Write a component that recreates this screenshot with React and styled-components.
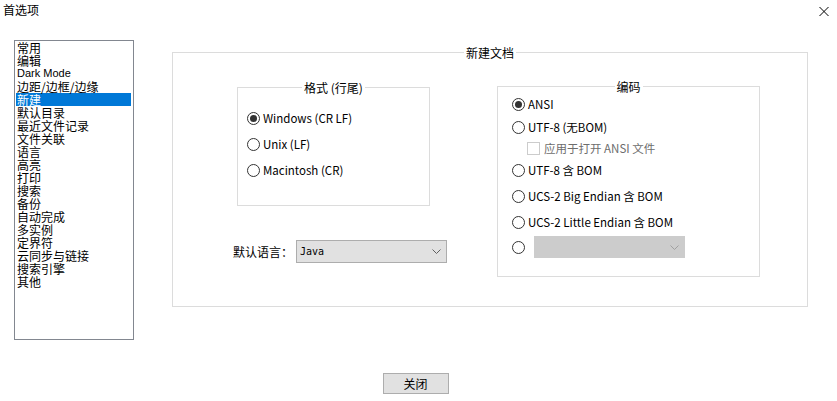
import React from 'react';
import styled, { createGlobalStyle } from 'styled-components';

const GlobalStyle = createGlobalStyle`
  html, body { margin: 0; padding: 0; background: #ffffff; }
  body { font-family: "Noto Sans CJK SC", "Noto Sans", sans-serif; font-size: 12px; color: #000; }
`

const Window = styled.div`
  width: 837px;
  height: 401px;
  display: flex;
  flex-direction: column;
  background: #fff;
  overflow: hidden;
`
const TitleBar = styled.div`
  height: 22px;
  flex-shrink: 0;
  display: flex;
  justify-content: space-between;
  align-items: flex-start;
`
const Title = styled.div`
  padding: 3px 0 0 3px;
  line-height: 14px;
  font-size: 12px;
`
const CloseX = styled.div`
  width: 10px;
  height: 9px;
  margin: 7px 8px 0 0;
  display: flex;
`
const Body = styled.div`
  box-sizing: border-box;
  display: flex;
  align-items: flex-start;
  padding: 18px 0 0 14px;
  height: 351px;
  flex-shrink: 0;
`
const List = styled.ul`
  box-sizing: border-box;
  width: 120px;
  height: 300px;
  margin: 0;
  padding: 0 2px 0 1px;
  list-style: none;
  border: 1px solid #828790;
`
const Item = styled.li`
  height: 13px;
  line-height: 13px;
  padding-left: 1px;
  white-space: nowrap;
  background: ${p => (p.$active ? '#0078d7' : 'transparent')};
  color: ${p => (p.$active ? '#fff' : '#000')};
  font-family: ${p => (p.$latin ? '"Liberation Sans", sans-serif' : '"Noto Sans CJK SC", sans-serif')};
  font-size: ${p => (p.$latin ? '11px' : '12px')};
`
const Panel = styled.div`
  margin: 6px 0 0 38px;
`
const Group = styled.div`
  box-sizing: border-box;
  width: ${p => p.$w}px;
  display: flex;
  flex-direction: column;
  margin-top: ${p => p.$mt || 0}px;
`
const GroupHead = styled.div`
  display: flex;
  height: 13px;
  &::before, &::after {
    content: '';
    flex: 1;
    margin-top: 6px;
    border-top: 1px solid #dcdcdc;
  }
  &::before { border-left: 1px solid #dcdcdc; }
  &::after { border-right: 1px solid #dcdcdc; }
`
const GroupTitle = styled.span`
  padding: 0 2px;
  line-height: 13px;
  font-size: 12px;
  white-space: nowrap;
`
const GroupBody = styled.div`
  box-sizing: border-box;
  height: ${p => p.$h}px;
  border: 1px solid #dcdcdc;
  border-top: none;
  display: flex;
  flex-direction: column;
  padding: ${p => p.$pad || '0'};
`
const Columns = styled.div`
  display: flex;
  align-items: flex-start;
  gap: 67px;
`
const LeftCol = styled.div`
  width: 193px;
  display: flex;
  flex-direction: column;
`
const RadioRow = styled.label`
  display: flex;
  align-items: center;
  height: ${p => p.$h || 26}px;
  padding-left: ${p => p.$indent || 0}px;
  font-size: 11.5px;
  color: ${p => (p.$disabled ? '#6d6d6d' : '#000')};
  white-space: nowrap;
`
const Circle = styled.span`
  box-sizing: border-box;
  width: 13px;
  height: 13px;
  border-radius: 50%;
  border: 1px solid #333;
  background: #fff;
  margin-right: 3px;
  display: flex;
  align-items: center;
  justify-content: center;
  flex-shrink: 0;
  &::after {
    content: '';
    width: 7px;
    height: 7px;
    border-radius: 50%;
    background: ${p => (p.$on ? '#333' : 'transparent')};
  }
`
const Box = styled.span`
  box-sizing: border-box;
  width: 13px;
  height: 13px;
  border: 1px solid #cccccc;
  background: #fff;
  margin-right: 4px;
  flex-shrink: 0;
`
const Select = styled.div`
  box-sizing: border-box;
  width: ${p => p.$w}px;
  height: ${p => p.$h}px;
  margin-left: ${p => p.$ml || 0}px;
  flex-shrink: 0;
  background: ${p => (p.$disabled ? '#cccccc' : '#e1e1e1')};
  border: 1px solid ${p => (p.$disabled ? '#cccccc' : '#adadad')};
  display: flex;
  align-items: center;
  justify-content: space-between;
  padding: 0 5px 0 3px;
  font-family: "DejaVu Sans Mono", monospace;
  font-size: 10px;
`
const LangRow = styled.div`
  display: flex;
  align-items: center;
  margin: 34px 0 0 -4px;
  height: 23px;
`
const LangLabel = styled.span`
  font-size: 12px;
  width: 63px;
  flex-shrink: 0;
  white-space: nowrap;
`
const Footer = styled.div`
  display: flex;
  justify-content: center;
  padding: 0 6px 0 0;
`
const Button = styled.button`
  box-sizing: border-box;
  width: 66px;
  height: 21px;
  background: #e1e1e1;
  border: 1px solid #adadad;
  font-family: "Noto Sans CJK SC", sans-serif;
  font-size: 12px;
  padding: 0;
  line-height: 19px;
  color: #000;
`

const Chevron = ({ color }) => (
  <svg width="9" height="5" viewBox="0 0 9 5">
    <path d="M0.5 0.5 L4.5 4.5 L8.5 0.5" fill="none" stroke={color} strokeWidth="1" />
  </svg>
);

const pages = [
  '常用', '编辑', 'Dark Mode', '边距/边框/边缘', '新建', '默认目录', '最近文件记录',
  '文件关联', '语言', '高亮', '打印', '搜索', '备份', '自动完成', '多实例', '定界符',
  '云同步与链接', '搜索引擎', '其他',
];

const GroupBox = ({ title, w, h, mt, pad, children }) => (
  <Group $w={w} $mt={mt}>
    <GroupHead>
      <GroupTitle>{title}</GroupTitle>
    </GroupHead>
    <GroupBody $h={h} $pad={pad}>{children}</GroupBody>
  </Group>
);

const Radio = ({ on, children, h, indent }) => (
  <RadioRow $h={h} $indent={indent}>
    <Circle $on={on} />
    {children}
  </RadioRow>
);

export default function App() {
  return (
    <Window>
      <GlobalStyle />
      <TitleBar>
        <Title>首选项</Title>
        <CloseX>
          <svg width="10" height="9" viewBox="0 0 10 9">
            <path d="M0.5 0 L9.5 9 M9.5 0 L0.5 9" stroke="#000" strokeWidth="1" />
          </svg>
        </CloseX>
      </TitleBar>
      <Body>
        <List>
          {pages.map(p => (
            <Item key={p} $active={p === '新建'} $latin={p === 'Dark Mode'}>{p}</Item>
          ))}
        </List>
        <Panel>
          <GroupBox title="新建文档" w={636} h={248} pad="21px 0 0 64px">
            <Columns>
              <LeftCol>
                <GroupBox title="格式 (行尾)" w={193} h={112} mt={1} pad="11px 0 0 9px">
                  <Radio on>Windows (CR LF)</Radio>
                  <Radio>Unix (LF)</Radio>
                  <Radio>Macintosh (CR)</Radio>
                </GroupBox>
                <LangRow>
                  <LangLabel>默认语言：</LangLabel>
                  <Select $w={151} $h={23}>
                    <span>Java</span>
                    <Chevron color="#606060" />
                  </Select>
                </LangRow>
              </LeftCol>
              <GroupBox title="编码" w={263} h={184} pad="0 0 0 14px">
                <Radio on h={22}>ANSI</Radio>
                <Radio h={24}>UTF-8 (无BOM)</Radio>
                <RadioRow $h={18} $indent={15} $disabled>
                  <Box />
                  应用于打开 ANSI 文件
                </RadioRow>
                <Radio h={26}>UTF-8 含 BOM</Radio>
                <Radio h={26}>UCS-2 Big Endian 含 BOM</Radio>
                <Radio h={26}>UCS-2 Little Endian 含 BOM</Radio>
                <RadioRow $h={24}>
                  <Circle />
                  <Select $w={151} $h={22} $ml={6} $disabled>
                    <span />
                    <Chevron color="#a0a0a0" />
                  </Select>
                </RadioRow>
              </GroupBox>
            </Columns>
          </GroupBox>
        </Panel>
      </Body>
      <Footer>
        <Button>关闭</Button>
      </Footer>
    </Window>
  );
}
